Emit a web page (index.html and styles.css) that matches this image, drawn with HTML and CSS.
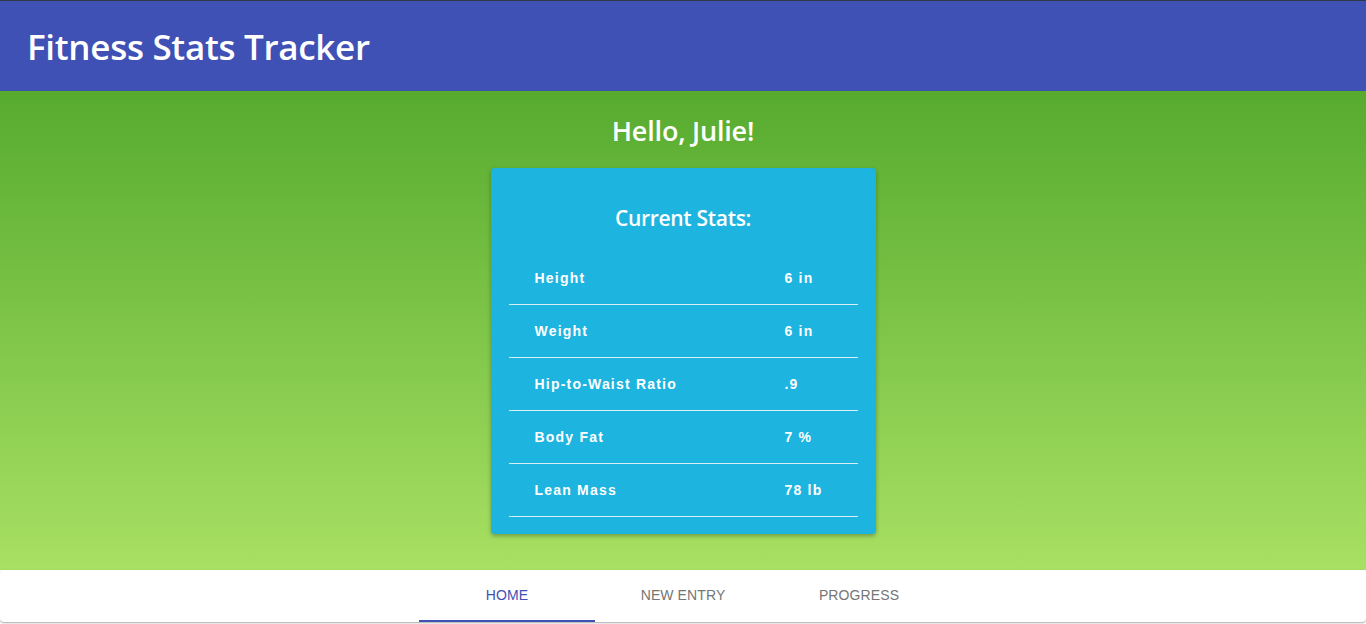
FILE: index.html
```html
<!DOCTYPE html>
<html>
<head>
<meta charset="utf-8">
<link rel="stylesheet" href="styles.css">
</head>
<body>
<header class="app-bar">
  <h1 class="app-title">Fitness Stats Tracker</h1>
</header>
<main class="main">
  <h2 class="greeting">Hello, Julie!</h2>
  <section class="card">
    <h3 class="card-title">Current Stats:</h3>
    <table class="stats">
      <tr><td class="label">Height</td><td class="value">6 in</td></tr>
      <tr><td class="label">Weight</td><td class="value">6 in</td></tr>
      <tr><td class="label">Hip-to-Waist Ratio</td><td class="value">.9</td></tr>
      <tr><td class="label">Body Fat</td><td class="value">7 %</td></tr>
      <tr><td class="label">Lean Mass</td><td class="value">78 lb</td></tr>
    </table>
  </section>
</main>
<nav class="tabs">
  <a class="tab active">HOME</a>
  <a class="tab">NEW ENTRY</a>
  <a class="tab">PROGRESS</a>
</nav>
</body>
</html>
```
FILE: styles.css
```css
html, body {
  margin: 0;
  padding: 0;
}
body {
  font-family: "Open Sans", "Liberation Sans", sans-serif;
  border-top: 1px solid #2c3947;
  background: #ffffff;
  height: 623px;
  overflow: hidden;
}
.app-bar {
  height: 90px;
  background: #3f51b5;
  display: flex;
  align-items: center;
  padding-left: 27px;
}
.app-title {
  margin: 0;
  color: #fff;
  font-size: 35px;
  font-weight: 600;
  letter-spacing: -0.3px;
}
.main {
  background: linear-gradient(to bottom, #56ab2f, #a8e063);
  display: flex;
  flex-direction: column;
  align-items: center;
  padding-top: 22px;
  padding-bottom: 36px;
}
.greeting {
  margin: 0 0 19px 0;
  color: #fff;
  font-size: 27px;
  font-weight: 600;
  line-height: 36px;
  letter-spacing: -0.2px;
}
.card {
  width: 385px;
  background: #1db4df;
  border-radius: 4px;
  box-shadow: 0 2px 4px rgba(0,0,0,0.3);
  padding: 36px 18px 17px;
  box-sizing: border-box;
}
.card-title {
  margin: 0 0 20px 0;
  text-align: center;
  color: #fff;
  font-size: 21px;
  font-weight: 600;
  line-height: 28px;
  letter-spacing: -0.3px;
}
.stats {
  width: 100%;
  border-collapse: collapse;
}
.stats td {
  height: 52px;
  border-bottom: 1px solid #d9eef5;
  color: #fff;
  font-family: "Liberation Sans", Arial, sans-serif;
  font-weight: bold;
  font-size: 14px;
  letter-spacing: 1.2px;
  padding: 0;
}
.stats .label {
  padding-left: 26px;
  width: 250px;
}
.tabs {
  height: 52px;
  background: #fff;
  border-radius: 4px;
  box-shadow: 0 1px 2px rgba(0,0,0,0.35);
  display: flex;
  justify-content: center;
}
.tab {
  width: 176px;
  display: flex;
  align-items: center;
  justify-content: center;
  font-family: "Liberation Sans", Arial, sans-serif;
  font-size: 14px;
  letter-spacing: 0.1px;
  color: #757575;
  box-sizing: border-box;
  border-bottom: 2px solid transparent;
}
.tab.active {
  color: #3f51b5;
  border-bottom-color: #3f51b5;
}
```
